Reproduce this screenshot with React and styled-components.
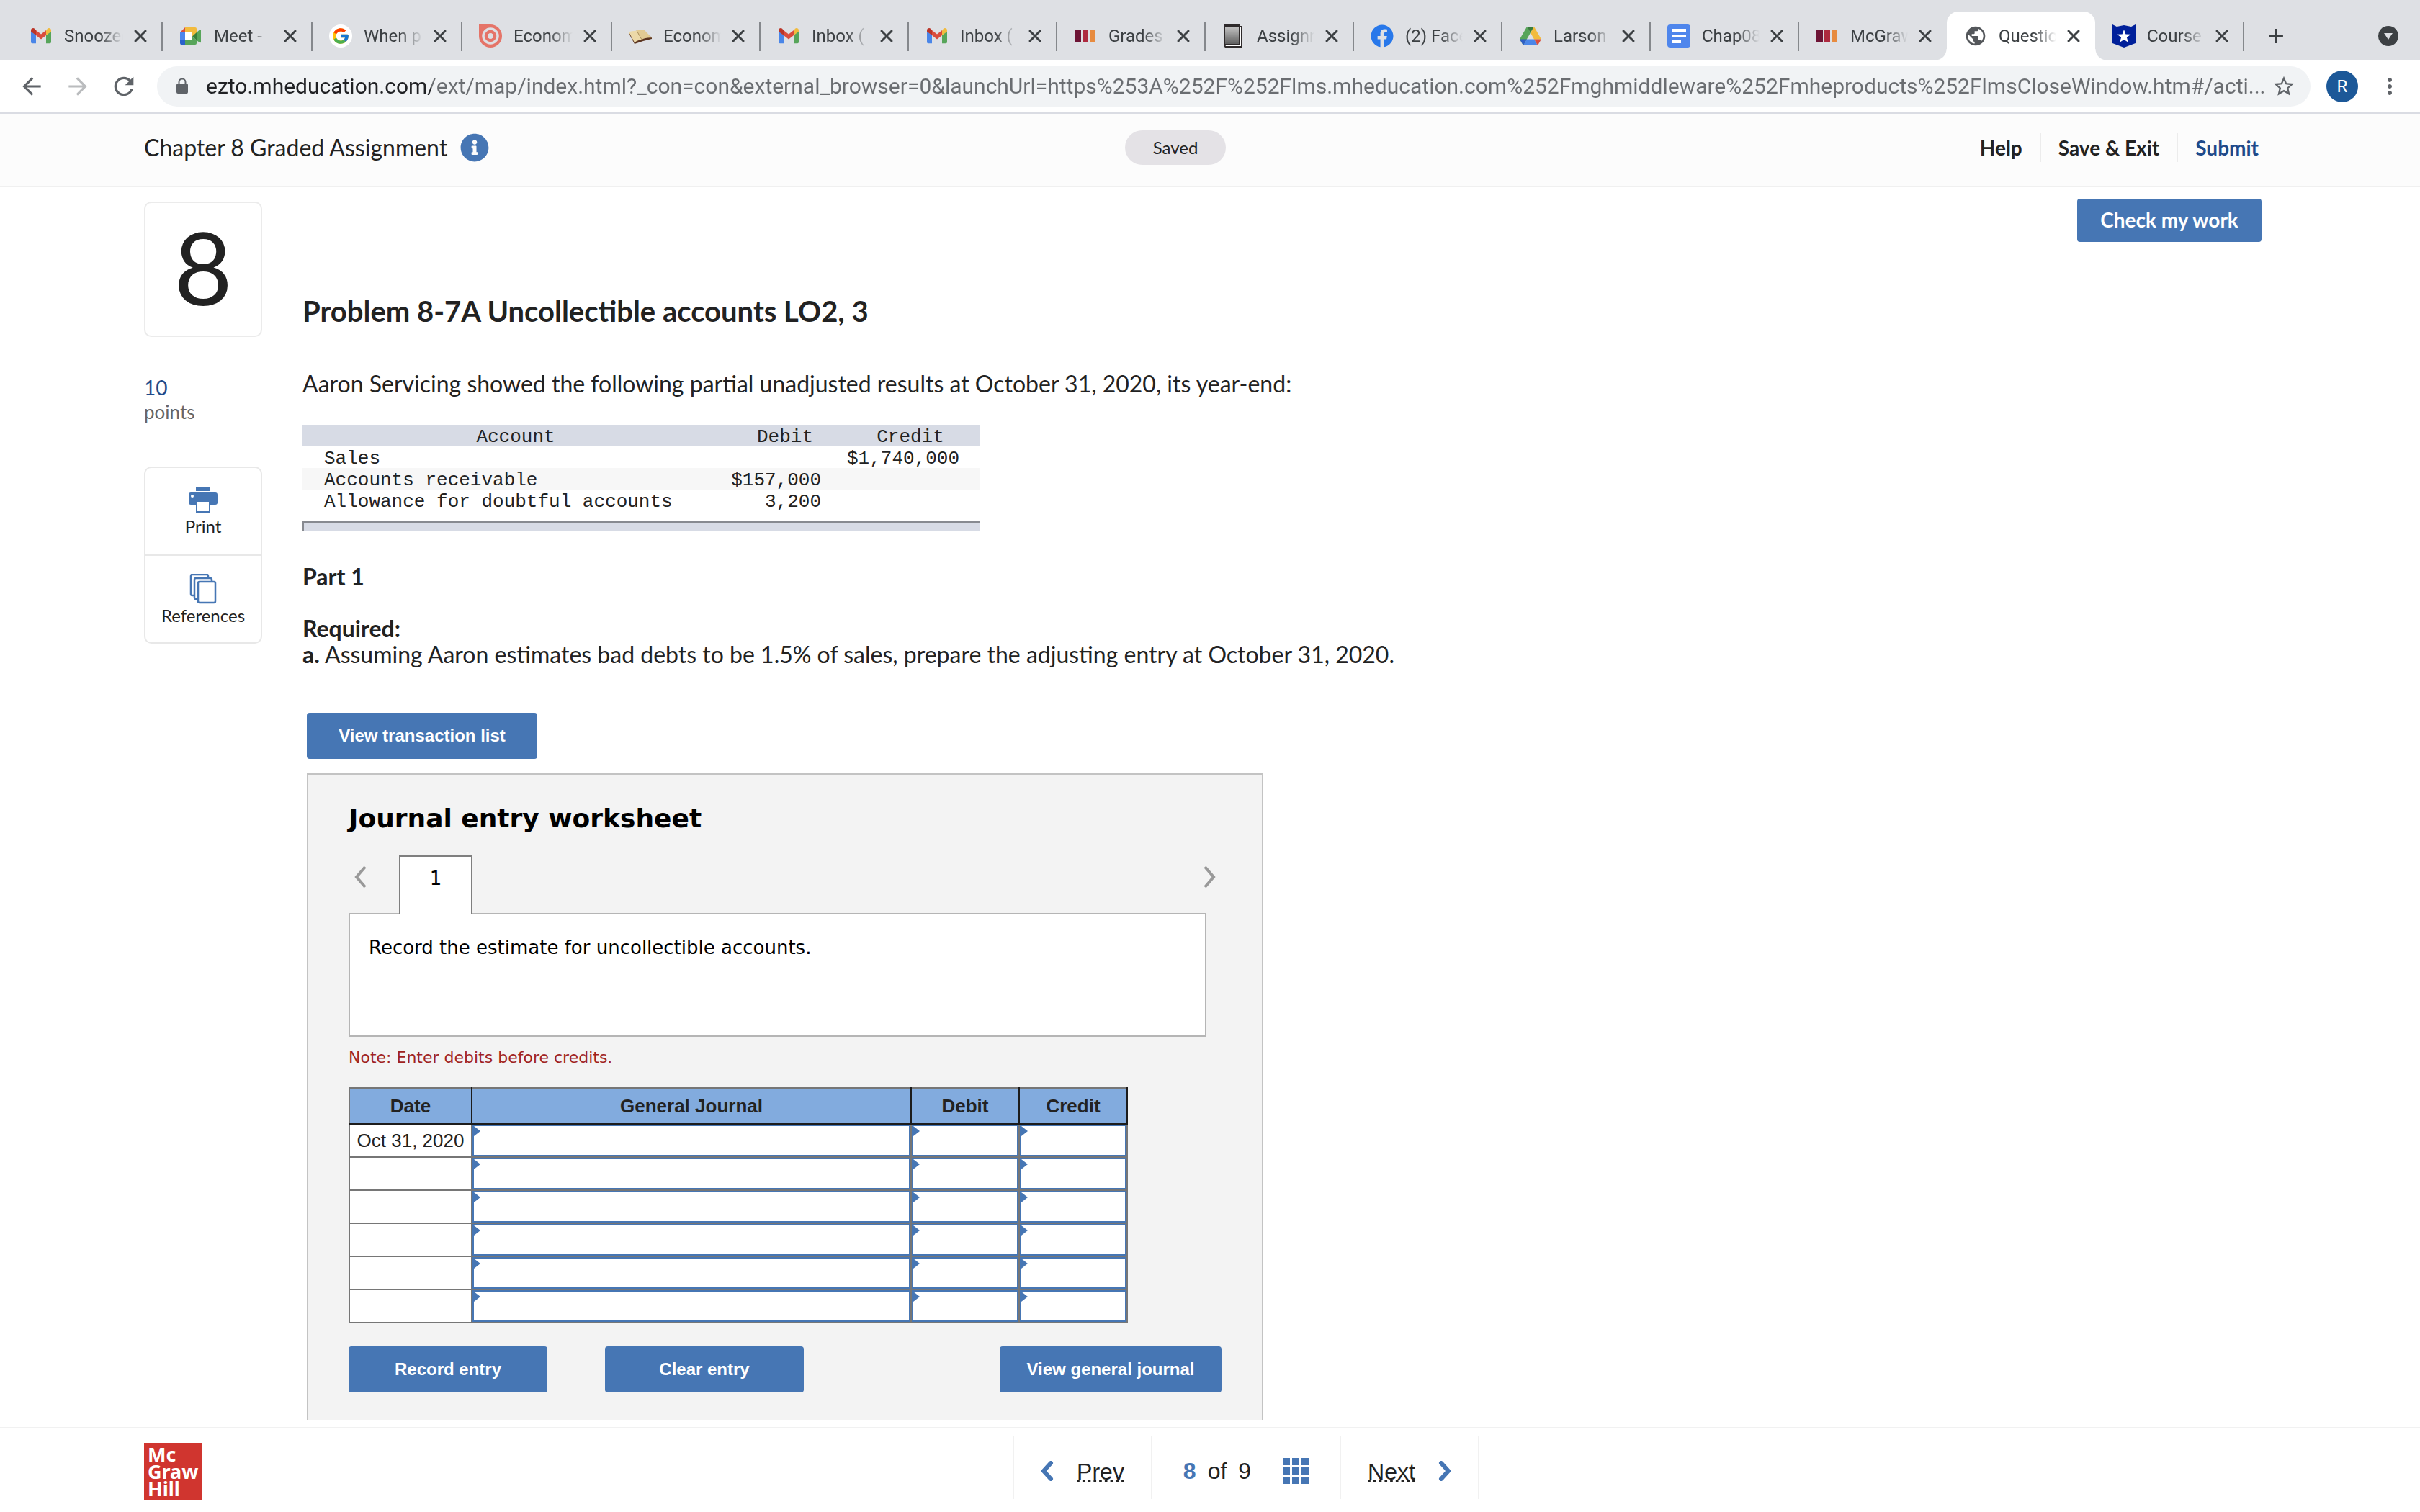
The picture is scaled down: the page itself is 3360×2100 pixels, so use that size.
import React from 'react';
import styled, { createGlobalStyle, css } from 'styled-components';
import { FcGoogle } from 'react-icons/fc';
import { FaFacebook, FaInfoCircle } from 'react-icons/fa';
import {
  MdAdd,
  MdArrowBack,
  MdArrowForward,
  MdMoreVert,
  MdPublic,
  MdRefresh,
  MdStarBorder
} from 'react-icons/md';

const blue = '#4676b4';
const ink = '#222';
const brandFont = 'Lato, "Open Sans", sans-serif';
const arial = '"Liberation Sans", Arial, sans-serif';
const verdana = '"DejaVu Sans", Verdana, sans-serif';

const GlobalStyle = createGlobalStyle`
  * {
    box-sizing: border-box;
  }

  body {
    margin: 0;
    background: #fff;
    color: ${ink};
    font-family: ${brandFont};
  }

  button {
    border: 0;
    padding: 0;
    background: none;
    color: inherit;
    font: inherit;
    cursor: pointer;
  }

  a {
    color: inherit;
    text-decoration: none;
  }

  svg {
    display: block;
    flex: none;
  }
`;

const Window = styled.div`
  display: flex;
  flex-direction: column;
  height: 100vh;
`;

/* Browser tabs */

const TabStrip = styled.div`
  display: flex;
  align-items: flex-end;
  height: 84px;
  padding: 0 30px 0 17px;
  background: #dee0e4;
  font-family: Roboto, sans-serif;
`;

const BrowserTab = styled.div`
  position: relative;
  display: flex;
  align-items: center;
  flex: none;
  width: 206px;
  height: 68px;
  padding: 0 20px 0 24px;
  color: #3c4043;
  font-size: 24px;

  &:nth-child(-n + 4) {
    width: 208px;
  }

  &::after {
    content: '';
    position: absolute;
    right: -1px;
    top: 15px;
    width: 2px;
    height: 40px;
    background: #85888c;
  }

  ${props =>
    props.$plain &&
    css`
      &::after {
        display: none;
      }
    `};

  ${props =>
    props.$active &&
    css`
      z-index: 1;
      border-radius: 16px 16px 0 0;
      background: #fff;

      &::before,
      &::after {
        content: '';
        display: block;
        position: absolute;
        top: auto;
        bottom: 0;
        width: 16px;
        height: 16px;
      }

      &::before {
        left: -16px;
        background: radial-gradient(circle at 0 0, transparent 15px, #fff 16px);
      }

      &::after {
        right: -16px;
        background: radial-gradient(circle at 100% 0, transparent 15px, #fff 16px);
      }
    `};
`;

const TabTitle = styled.span`
  flex: 1;
  margin: 0 14px 0 16px;
  overflow: hidden;
  white-space: nowrap;
  mask-image: linear-gradient(to right, #000 60%, transparent 100%);
`;

const TabClose = styled.button`
  display: flex;
`;

const NewTab = styled.button`
  display: flex;
  align-self: center;
  margin: 16px auto 0 28px;
  color: #3c4043;
`;

const TabSearch = styled.button`
  display: flex;
  align-self: center;
  margin-top: 16px;
`;

/* Browser toolbar */

const Toolbar = styled.div`
  display: flex;
  align-items: center;
  height: 74px;
  padding: 0 24px 0 26px;
  border-bottom: 2px solid #dadce3;
  color: #5f6368;
  font-family: Roboto, sans-serif;
`;

const ToolButton = styled.button`
  display: flex;
  justify-content: center;
  width: 36px;
  margin-right: 28px;
  color: ${props => (props.disabled ? '#babcbe' : '#5f6368')};
`;

const Omnibox = styled.label`
  display: flex;
  align-items: center;
  flex: 1;
  height: 56px;
  padding: 0 20px 0 26px;
  border-radius: 28px;
  background: #f1f3f5;
`;

const Address = styled.input`
  flex: 1;
  min-width: 0;
  margin: 0 8px 0 24px;
  border: 0;
  padding: 0;
  outline: 0;
  background: linear-gradient(to right, #202124 312px, #6a6d71 312px);
  background-clip: text;
  color: transparent;
  font: 30px/40px Roboto, sans-serif;
`;

const Avatar = styled.button`
  width: 44px;
  height: 44px;
  margin: 0 26px 0 22px;
  border-radius: 50%;
  background: #1c5898;
  color: #fff;
  font-size: 24px;
`;

/* Assignment header */

const Header = styled.header`
  display: flex;
  align-items: center;
  justify-content: space-between;
  flex: none;
  height: 102px;
  padding: 0 224px 6px 200px;
  border-bottom: 2px solid #f0f0f0;
  background: #fcfcfc;
`;

const HeaderSide = styled.div`
  display: flex;
  align-items: center;
  flex: 1;
`;

const HeaderNav = styled(HeaderSide).attrs({ as: 'nav' })`
  justify-content: flex-end;
  margin-left: 72px;
`;

const AssignmentTitle = styled.h1`
  margin: 0 18px 0 0;
  font-size: 32px;
  font-weight: 400;
  line-height: 40px;
`;

const Saved = styled.span`
  padding: 0 39px;
  border-radius: 24px;
  background: #e4e2e6;
  font-size: 24px;
  line-height: 48px;
`;

const HeaderLink = styled.a`
  padding: 0 24px;
  border-left: 2px solid #ececec;
  font-size: 28px;
  font-weight: 700;
  line-height: 40px;

  &:first-child {
    border-left: 0;
  }

  &:last-child {
    padding-right: 0;
    color: #1f4a8a;
  }
`;

/* Question */

const Main = styled.main`
  display: flex;
  align-items: flex-start;
  flex: 1;
  min-height: 0;
  margin-bottom: 10px;
  padding: 0 220px 0 200px;
  overflow: hidden;
`;

const Sidebar = styled.aside`
  flex: none;
  width: 164px;
  margin-right: 56px;
  padding-top: 20px;
`;

const QuestionNumber = styled.div`
  height: 188px;
  border: 2px solid #ebebeb;
  border-radius: 10px;
  font-size: 140px;
  line-height: 176px;
  text-align: center;
`;

const Points = styled.div`
  margin: 53px 0 59px;
  color: #666;
  font-size: 26px;
  line-height: 34px;
`;

const PointsValue = styled.div`
  color: #1f4a8a;
  font-size: 28px;
`;

const Tools = styled.div`
  border: 2px solid #e8e8e8;
  border-radius: 10px;
`;

const Tool = styled.button`
  display: flex;
  flex-direction: column;
  align-items: center;
  width: 100%;
  height: 120px;
  padding-top: 25px;
  font-size: 24px;
  line-height: 32px;

  & + & {
    height: 122px;
    border-top: 2px solid #e8e8e8;
  }
`;

const Question = styled.section`
  flex: 1;
  min-width: 0;
  padding-top: 148px;
  font-size: 32px;
  line-height: 36px;
`;

const QuestionTitle = styled.h2`
  margin: 0 0 59px;
  font-size: 40px;
  line-height: 48px;
`;

const Paragraph = styled.p`
  margin: ${props => props.$margin || '0'};
`;

const ResultsTable = styled.table`
  width: 940px;
  table-layout: fixed;
  border-collapse: collapse;
  font: 26px/26px "Liberation Mono", "Courier New", monospace;

  th,
  td {
    height: 30px;
    padding: 4px 0 0;
    font-weight: 400;
  }

  thead tr {
    background: #d7dbe5;
  }

  tbody tr:nth-child(even) {
    background: #f7f7f7;
  }

  tbody th {
    padding-left: 30px;
    text-align: left;
  }

  td {
    padding-right: 28px;
    text-align: right;
  }
`;

const TableRule = styled.div`
  width: 940px;
  height: 14px;
  margin-top: 14px;
  border-top: 2px solid #878a90;
  border-left: 2px solid #878a90;
  background: #d7dbe5;
`;

const Button = styled.button`
  flex: none;
  min-width: ${props => props.$width || '0'};
  height: 64px;
  padding: 0 32px;
  border-radius: 4px;
  background: ${blue};
  color: #fff;
  font: 700 24px/28px ${arial};
`;

const CheckButton = styled(Button)`
  height: 60px;
  margin-top: 16px;
  padding: 0 24px 2px;
  font: 700 28px/32px ${brandFont};
`;

/* Worksheet */

const Workspace = styled.div`
  width: 1328px;
  margin: 63px 0 0 6px;
`;

const Worksheet = styled.div`
  margin-top: 20px;
  padding: 39px 56px 60px;
  border: 2px solid #c3c3c3;
  background: #f3f3f3;
  color: #000;
`;

const WorksheetTitle = styled.h3`
  margin: 0 0 29px;
  font: 700 36px/44px ${verdana};
`;

const Steps = styled.div`
  position: relative;
  display: flex;
  align-items: flex-start;
  margin-bottom: -2px;
`;

const StepArrow = styled.button`
  width: ${props => (props.$next ? '26px' : '70px')};
  margin-left: ${props => (props.$next ? 'auto' : '0')};
  padding: 12px 0 12px ${props => (props.$next ? '0' : '6px')};
`;

const Step = styled.button`
  width: 102px;
  height: 82px;
  padding-bottom: 20px;
  border: 2px solid #7f7f7f;
  border-bottom: 0;
  background: #fff;
  font: 26px/32px ${verdana};
`;

const Description = styled.div`
  height: 172px;
  margin-right: 21px;
  padding: 30px 26px;
  border: 2px solid #b5b5b5;
  background: #fff;
  font: 26px/32px ${verdana};
`;

const Note = styled.p`
  margin: 14px 0 26px;
  color: #a0231f;
  font: 22px/30px ${verdana};
`;

const JournalTable = styled.table`
  width: 1082px;
  table-layout: fixed;
  border-collapse: collapse;
  background: #fff;
  color: ${ink};
  font: 26px/30px ${arial};

  th,
  td {
    position: relative;
    height: 46px;
    padding: 0;
    border: 2px solid #767676;
    text-align: center;
  }

  th {
    height: 50px;
    border-right-color: #1c1c1c;
    border-bottom-color: #1c1c1c;
    background: #82abde;
    font-weight: 700;
  }
`;

const EntryCell = styled.td`
  &::before {
    content: '';
    position: absolute;
    top: 2px;
    left: 2px;
    border: 7px solid transparent;
    border-right: 0;
    border-left: 9px solid ${blue};
  }
`;

const EntryInput = styled.input`
  display: block;
  width: 100%;
  height: 44px;
  padding: 0 12px;
  border: 2px solid ${blue};
  border-radius: 0;
  outline: 0;
  background: #fff;
  font: 26px/30px ${arial};
`;

const Actions = styled.div`
  display: flex;
  gap: 80px;
  margin-top: 32px;

  ${Button}:last-child {
    margin-left: auto;
  }
`;

/* Footer */

const Footer = styled.footer`
  display: flex;
  flex: none;
  height: 118px;
  padding: 0 180px 0 200px;
  border-top: 2px solid #f1f1f1;
`;

const Logo = styled.a`
  width: 80px;
  height: 80px;
  margin-top: 20px;
  padding: 4px 5px;
  background: #d0352f;
  color: #fff;
  font: 700 27px/24px "Noto Sans", sans-serif;
`;

const Pager = styled.nav`
  display: flex;
  flex: 1;
  justify-content: center;
  margin: 10px 0 18px;
  font: 32px/36px ${arial};
`;

const PagerItem = styled.div`
  display: flex;
  align-items: center;
  justify-content: center;
  gap: ${props => props.$gap || '32px'};
  width: ${props => props.$width || '192px'};
  padding-top: 10px;
  border-left: 2px solid #f1f1f1;

  &:last-child {
    width: 194px;
    border-right: 2px solid #f1f1f1;
  }
`;

const PagerLink = styled.a`
  display: flex;
  align-items: center;
  gap: 32px;
`;

const PagerLabel = styled.span`
  height: 32px;
  border-bottom: 4px dotted ${ink};
  line-height: 34px;
`;

const Current = styled.b`
  color: ${blue};
`;

const AllQuestions = styled.button`
  margin-left: 28px;
`;

/* Icons */

const CloseIcon = () => (
  <svg
    width="20"
    height="20"
    viewBox="0 0 20 20"
    stroke="#3c4043"
    strokeWidth="3"
    strokeLinecap="round"
  >
    <path d="M3 3l14 14M17 3L3 17" />
  </svg>
);

const LockIcon = () => (
  <svg width="18" height="24" viewBox="0 0 18 24">
    <path d="M4.500 9V6a4.500 4.500 0 0 1 9 0v3" fill="none" stroke="#5f6368" strokeWidth="2" />
    <rect x="1" y="8" width="16" height="14" rx="2" fill="#5f6368" />
  </svg>
);

const Gmail = () => (
  <svg width="32" height="32" viewBox="0 0 32 32">
    <path d="M2 8v16.500a1.800 1.800 0 0 0 1.800 1.800H9V15L2 9z" fill="#4a86e8" />
    <path d="M30 8v16.500a1.800 1.800 0 0 1-1.800 1.800H23V15l7-6z" fill="#57a55a" />
    <path d="M23 8.500V15l7-5.300V8.200c0-2.700-3-4-5-2.500z" fill="#f2bb3d" />
    <path d="M9 15V8l7 5.400L23 8v7l-7 5.400z" fill="#da4c3c" />
    <path d="M2 8.200v1.500L9 15V8L7 5.700c-2-1.500-5-.2-5 2.500z" fill="#bb3528" />
  </svg>
);

const Meet = () => (
  <svg width="32" height="32" viewBox="0 0 32 32">
    <path d="M8 4v7H1z" fill="#d94d3d" />
    <path d="M1 11h7v11H1z" fill="#4f86ec" />
    <path d="M1 22h7v6H3a2 2 0 0 1-2-2z" fill="#2a62cc" />
    <path d="M8 4h14a2 2 0 0 1 2 2v6l-6 5v-6H8z" fill="#f2bb3d" />
    <path d="M8 22h10v-5l6 5v4a2 2 0 0 1-2 2H8z" fill="#57a55a" />
    <path d="M8 11h10v11H8z" fill="#fff" />
    <path d="M24 11l4-3.500c.8-.7 2-.3 2 .8v16c0 1-1.200 1.500-2 .8L24 22z" fill="#57a55a" />
    <path d="M18 16.500l6-5.500v11z" fill="#38803c" />
  </svg>
);

const GoogleBadge = styled.span`
  display: flex;
  padding: 3px;
  border-radius: 50%;
  background: #fff;
`;

const Target = () => (
  <svg width="32" height="32" viewBox="0 0 32 32">
    <path d="M0 0h16a16 16 0 1 1-16 16z" fill="#e57468" />
    <circle cx="16" cy="16" r="10" fill="none" stroke="#dee0e4" strokeWidth="3.500" />
    <circle cx="16" cy="16" r="4.500" fill="none" stroke="#dee0e4" strokeWidth="3" />
    <circle cx="16" cy="16" r="5.500" fill="none" stroke="#e57468" strokeWidth="3.500" />
    <circle cx="16" cy="16" r="3.800" fill="#dee0e4" />
  </svg>
);

const Book = () => (
  <svg width="32" height="32" viewBox="0 0 32 32">
    <path d="M0 12l8 15 12-4 12-3v-2L20 9z" fill="#5c3520" />
    <path d="M0 10.500c3-1.500 6-1 11-2L18 21c-4 .3-6 1.500-10 4z" fill="#ecd9a8" />
    <path d="M11 8.500c4-1 7-1.500 11-.5l10 10.500c-5-.5-10 .5-14 2.500z" fill="#e2cb93" />
    <path d="M11 8.500L18 21" stroke="#b09660" fill="none" />
  </svg>
);

const Bars = () => (
  <svg width="32" height="32" viewBox="0 0 32 32">
    <path d="M1 7h9v18H1z" fill="#6d1435" />
    <path d="M12 7h8v18h-8z" fill="#ae2a3f" />
    <path d="M22 7h6a2 2 0 0 1 2 2v14a2 2 0 0 1-2 2h-6z" fill="#e78b3f" />
  </svg>
);

const Notebook = () => (
  <svg width="32" height="32" viewBox="0 0 32 32">
    <defs>
      <linearGradient id="cover" x1="0" y1="0" x2="0" y2="1">
        <stop offset="0" stopColor="#c4c4c4" />
        <stop offset="1" stopColor="#606060" />
      </linearGradient>
    </defs>
    <path d="M2 0h22v2h3v30H4l-2-2z" fill="#2e2a2b" />
    <path d="M4 28h20V4h2v26H5z" fill="#fff" />
    <path d="M4 3h19v24H4z" fill="url(#cover)" />
  </svg>
);

const Drive = () => (
  <svg width="32" height="32" viewBox="0 0 32 32">
    <path d="M11 3L1 20.500 6 29l10-17.500z" fill="#57a55a" />
    <path d="M11 3h10l-5 8.500z" fill="#3a7d3e" />
    <path d="M21 3l10 17.500H21L16 11.500z" fill="#f2bb3d" />
    <path d="M11 20.500h10L26 29H6z" fill="#4a86e8" />
    <path d="M1 20.500h10L6 29z" fill="#2f5fc4" />
    <path d="M21 20.500h10L26 29z" fill="#da4c3c" />
  </svg>
);

const Docs = () => (
  <svg width="32" height="32" viewBox="0 0 32 32">
    <rect width="32" height="32" rx="4" fill="#4f86ec" />
    <path d="M6 6h20v4H6zM6 14h20v4H6zM6 22h13v4H6z" fill="#fff" />
  </svg>
);

const Shield = () => (
  <svg width="32" height="32" viewBox="0 0 32 32">
    <path d="M0 0l6 3 10-2 10 2 6-3v26l-16 6-16-6z" fill="#00209a" />
    <path
      d="M16 7l2.400 6.600 7 .2-5.500 4.300 1.900 6.700-5.800-3.900-5.800 3.900 1.900-6.700-5.500-4.300 7-.2z"
      fill="#fff"
    />
  </svg>
);

const PrintIcon = () => (
  <svg width="40" height="40" viewBox="0 0 40 40">
    <path d="M10 2h20v5H10z" fill={blue} />
    <path d="M3 9h34a3 3 0 0 1 3 3v11a3 3 0 0 1-3 3h-7v11H10V26H3a3 3 0 0 1-3-3V12a3 3 0 0 1 3-3z" fill={blue} />
    <path d="M12 22h16v13H12z" fill="#fff" />
    <circle cx="5" cy="14" r="2" fill="#fff" />
  </svg>
);

const ReferencesIcon = () => (
  <svg width="40" height="42" viewBox="0 0 40 42" fill="#fff" stroke={blue} strokeWidth="2.500">
    <rect x="3" y="1" width="24" height="29" rx="2" />
    <rect x="8" y="6" width="24" height="29" rx="2" />
    <rect x="13" y="11" width="24" height="29" rx="2" />
  </svg>
);

const ThinChevron = ({ right }) => (
  <svg width="20" height="36" viewBox="0 0 20 36" fill="none" stroke="#999" strokeWidth="4">
    <path d={right ? 'M3 4l12 14L3 32' : 'M17 4L5 18l12 14'} />
  </svg>
);

const BoldChevron = ({ right }) => (
  <svg
    width="18"
    height="28"
    viewBox="0 0 18 28"
    fill="none"
    stroke={blue}
    strokeWidth="6"
    strokeLinecap="round"
  >
    <path d={right ? 'M4 3l10 11L4 25' : 'M14 3L4 14l10 11'} />
  </svg>
);

const GridIcon = () => (
  <svg width="36" height="36" viewBox="0 0 36 36" fill={blue}>
    {[0, 13, 26].map(y =>
      [0, 13, 26].map(x => <rect key={`${x}-${y}`} x={x} y={y} width="10" height="10" />)
    )}
  </svg>
);

const browserTabs = [
  { title: 'Snoozed', icon: <Gmail /> },
  { title: 'Meet - ', icon: <Meet /> },
  { title: 'When p', icon: <GoogleBadge><FcGoogle size={26} /></GoogleBadge> },
  { title: 'Econom', icon: <Target /> },
  { title: 'Econom', icon: <Book /> },
  { title: 'Inbox (', icon: <Gmail /> },
  { title: 'Inbox (', icon: <Gmail /> },
  { title: 'Grades', icon: <Bars /> },
  { title: 'Assignm', icon: <Notebook /> },
  { title: '(2) Face', icon: <FaFacebook size={32} color="#2878ea" /> },
  { title: 'Larson', icon: <Drive /> },
  { title: 'Chap08', icon: <Docs /> },
  { title: 'McGraw', icon: <Bars />, plain: true },
  { title: 'Questio', icon: <MdPublic size={32} color="#54575b" />, active: true },
  { title: 'Course', icon: <Shield /> }
];

const address =
  'ezto.mheducation.com/ext/map/index.html?_con=con&external_browser=0&launchUrl=https%253A%252F%252Flms.mheducation.com%252Fmghmiddleware%252Fmheproducts%252FlmsCloseWindow.htm#/acti...';

const rows = [1, 2, 3, 4, 5, 6];

const App = () => (
  <Window>
    <GlobalStyle />
    <TabStrip>
      {browserTabs.map((tab, i) => (
        <BrowserTab key={i} $active={tab.active} $plain={tab.plain}>
          {tab.icon}
          <TabTitle>{tab.title}</TabTitle>
          <TabClose aria-label="Close tab">
            <CloseIcon />
          </TabClose>
        </BrowserTab>
      ))}
      <NewTab aria-label="New tab">
        <MdAdd size={34} />
      </NewTab>
      <TabSearch aria-label="Search tabs">
        <svg width="28" height="28" viewBox="0 0 28 28">
          <circle cx="14" cy="14" r="14" fill="#3c4043" />
          <path d="M8 10h12l-6 9z" fill="#dee0e4" />
        </svg>
      </TabSearch>
    </TabStrip>
    <Toolbar>
      <ToolButton aria-label="Back">
        <MdArrowBack size={38} />
      </ToolButton>
      <ToolButton aria-label="Forward" disabled>
        <MdArrowForward size={38} />
      </ToolButton>
      <ToolButton aria-label="Reload">
        <MdRefresh size={40} />
      </ToolButton>
      <Omnibox>
        <LockIcon />
        <Address aria-label="Address" defaultValue={address} />
        <MdStarBorder size={34} />
      </Omnibox>
      <Avatar>R</Avatar>
      <MdMoreVert size={36} />
    </Toolbar>
    <Header>
      <HeaderSide>
        <AssignmentTitle>Chapter 8 Graded Assignment</AssignmentTitle>
        <FaInfoCircle size={40} color={blue} />
      </HeaderSide>
      <Saved>Saved</Saved>
      <HeaderNav>
        <HeaderLink href="#help">Help</HeaderLink>
        <HeaderLink href="#exit">Save &amp; Exit</HeaderLink>
        <HeaderLink href="#submit">Submit</HeaderLink>
      </HeaderNav>
    </Header>
    <Main>
      <Sidebar>
        <QuestionNumber>8</QuestionNumber>
        <Points>
          <PointsValue>10</PointsValue>
          points
        </Points>
        <Tools>
          <Tool>
            <PrintIcon />
            Print
          </Tool>
          <Tool>
            <ReferencesIcon />
            References
          </Tool>
        </Tools>
      </Sidebar>
      <Question>
        <QuestionTitle>Problem 8-7A Uncollectible accounts LO2, 3</QuestionTitle>
        <Paragraph $margin="0 0 39px">
          Aaron Servicing showed the following partial unadjusted results at
          October 31, 2020, its year-end:
        </Paragraph>
        <ResultsTable>
          <colgroup>
            <col width="592" />
            <col width="156" />
            <col width="192" />
          </colgroup>
          <thead>
            <tr>
              <th>Account</th>
              <th>Debit</th>
              <th>Credit</th>
            </tr>
          </thead>
          <tbody>
            <tr>
              <th>Sales</th>
              <td />
              <td>$1,740,000</td>
            </tr>
            <tr>
              <th>Accounts receivable</th>
              <td>$157,000</td>
              <td />
            </tr>
            <tr>
              <th>Allowance for doubtful accounts</th>
              <td>3,200</td>
              <td />
            </tr>
          </tbody>
        </ResultsTable>
        <TableRule />
        <Paragraph $margin="45px 0 36px">
          <b>Part 1</b>
        </Paragraph>
        <Paragraph>
          <b>Required:</b>
        </Paragraph>
        <Paragraph>
          <b>a.</b> Assuming Aaron estimates bad debts to be 1.5% of sales,
          prepare the adjusting entry at October 31, 2020.
        </Paragraph>
        <Workspace>
          <Button $width="320px">View transaction list</Button>
          <Worksheet>
            <WorksheetTitle>Journal entry worksheet</WorksheetTitle>
            <Steps>
              <StepArrow aria-label="Previous entry">
                <ThinChevron />
              </StepArrow>
              <Step>1</Step>
              <StepArrow $next aria-label="Next entry">
                <ThinChevron right />
              </StepArrow>
            </Steps>
            <Description>Record the estimate for uncollectible accounts.</Description>
            <Note>Note: Enter debits before credits.</Note>
            <JournalTable>
              <colgroup>
                <col width="170" />
                <col width="610" />
                <col width="150" />
                <col width="150" />
              </colgroup>
              <thead>
                <tr>
                  <th>Date</th>
                  <th>General Journal</th>
                  <th>Debit</th>
                  <th>Credit</th>
                </tr>
              </thead>
              <tbody>
                {rows.map(row => (
                  <tr key={row}>
                    <td>{row === 1 && 'Oct 31, 2020'}</td>
                    <EntryCell>
                      <EntryInput aria-label={`General journal, line ${row}`} />
                    </EntryCell>
                    <EntryCell>
                      <EntryInput aria-label={`Debit, line ${row}`} />
                    </EntryCell>
                    <EntryCell>
                      <EntryInput aria-label={`Credit, line ${row}`} />
                    </EntryCell>
                  </tr>
                ))}
              </tbody>
            </JournalTable>
            <Actions>
              <Button $width="276px">Record entry</Button>
              <Button $width="276px">Clear entry</Button>
              <Button $width="308px">View general journal</Button>
            </Actions>
          </Worksheet>
        </Workspace>
      </Question>
      <CheckButton $width="256px">Check my work</CheckButton>
    </Main>
    <Footer>
      <Logo href="#home">
        Mc
        <br />
        Graw
        <br />
        Hill
      </Logo>
      <Pager>
        <PagerItem>
          <PagerLink href="#prev">
            <BoldChevron />
            <PagerLabel>Prev</PagerLabel>
          </PagerLink>
        </PagerItem>
        <PagerItem $width="262px" $gap="16px">
          <Current>8</Current>
          <span>of</span>
          <span>9</span>
          <AllQuestions aria-label="All questions">
            <GridIcon />
          </AllQuestions>
        </PagerItem>
        <PagerItem>
          <PagerLink href="#next">
            <PagerLabel>Next</PagerLabel>
            <BoldChevron right />
          </PagerLink>
        </PagerItem>
      </Pager>
    </Footer>
  </Window>
);

export default App;
